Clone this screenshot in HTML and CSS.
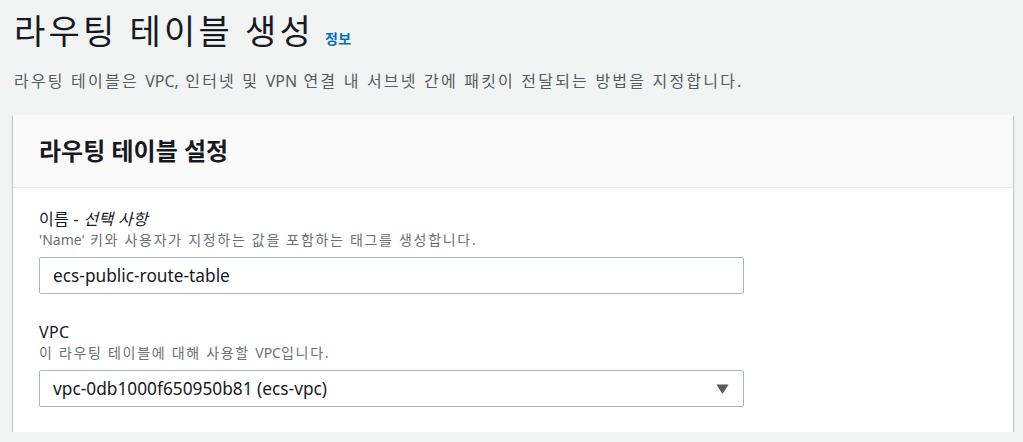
FILE: index.html
```html
<!DOCTYPE html>
<html lang="ko">
<head>
<meta charset="utf-8">
<link rel="stylesheet" href="styles.css">
</head>
<body>
<div class="page">
  <div class="title-row">
    <h1 class="title">라우팅 테이블 생성</h1>
    <a class="info" href="#">정보</a>
  </div>
  <p class="desc">라우팅 테이블은 <span class="lat">VPC,</span> 인터넷 및 <span class="lat">VPN</span> 연결 내 서브넷 간에 패킷이 전달되는 방법을 지정합니다.</p>
  <div class="card">
    <div class="card-header">
      <h2 class="card-title">라우팅 테이블 설정</h2>
    </div>
    <div class="card-body">
      <div class="field">
        <div class="label">이름 - <i>선택 사항</i></div>
        <div class="hint"><span class="lat">'Name'</span> 키와 사용자가 지정하는 값을 포함하는 태그를 생성합니다.</div>
        <div class="input">ecs-public-route-table</div>
      </div>
      <div class="field">
        <div class="label">VPC</div>
        <div class="hint">이 라우팅 테이블에 대해 사용할 <span class="lat">VPC</span>입니다.</div>
        <div class="input select">
          <span>vpc-0db1000f650950b81 (ecs-vpc)</span>
          <svg class="caret" width="13" height="10" viewBox="0 0 13 10"><path d="M0.5 0.5 H12.5 L7 9.3 Q6.5 10 6 9.3 Z" fill="#545b64"/></svg>
        </div>
      </div>
    </div>
  </div>
</div>
</body>
</html>
```

FILE: styles.css
```css
html, body {
  margin: 0;
  padding: 0;
  background: #f2f3f3;
}
body {
  font-family: "Noto Sans", "Noto Sans CJK KR", sans-serif;
  color: #16191f;
}
.page {
  padding: 0 10px 0 13px;
}
.title-row {
  display: flex;
  align-items: baseline;
  padding-top: 7px;
  padding-left: 1px;
}
.title {
  margin: 0;
  font-size: 34px;
  font-weight: 400;
  line-height: 48px;
  letter-spacing: 3.2px;
}
.info {
  margin-left: 11px;
  font-size: 14px;
  font-weight: 700;
  color: #0073bb;
  text-decoration: none;
  letter-spacing: 0.5px;
}
.desc {
  margin: 14px 0 0 1px;
  font-size: 16px;
  line-height: 24px;
  color: #545b64;
  letter-spacing: 2.2px;
}
.lat {
  letter-spacing: 0;
}
.card {
  margin-top: 22px;
  width: 1000px;
  background: #fff;
  box-shadow: 0 1px 1px 0 rgba(0,28,36,0.3), 1px 1px 1px 0 rgba(0,28,36,0.15), -1px 1px 1px 0 rgba(0,28,36,0.15);
}
.card-header {
  background: #fafafa;
  border-bottom: 1px solid #eaeded;
  padding: 18px 26px;
}
.card-title {
  margin: 0;
  font-size: 24px;
  font-weight: 700;
  line-height: 36px;
}
.card-body {
  padding: 20px 26px 25px;
  display: flex;
  flex-direction: column;
  gap: 27px;
}
.label {
  font-size: 16px;
  line-height: 22px;
  letter-spacing: 0.3px;
}
.hint {
  font-size: 14px;
  line-height: 20px;
  color: #687078;
  letter-spacing: 1.7px;
}
.input {
  margin-top: 7px;
  width: 705px;
  box-sizing: border-box;
  height: 37px;
  border: 1px solid #aab7b8;
  border-radius: 2px;
  background: #fff;
  padding: 0 13px;
  font-size: 17.3px;
  display: flex;
  align-items: center;
}
.select {
  justify-content: space-between;
}
.caret {
  margin-right: 1px;
}
```
